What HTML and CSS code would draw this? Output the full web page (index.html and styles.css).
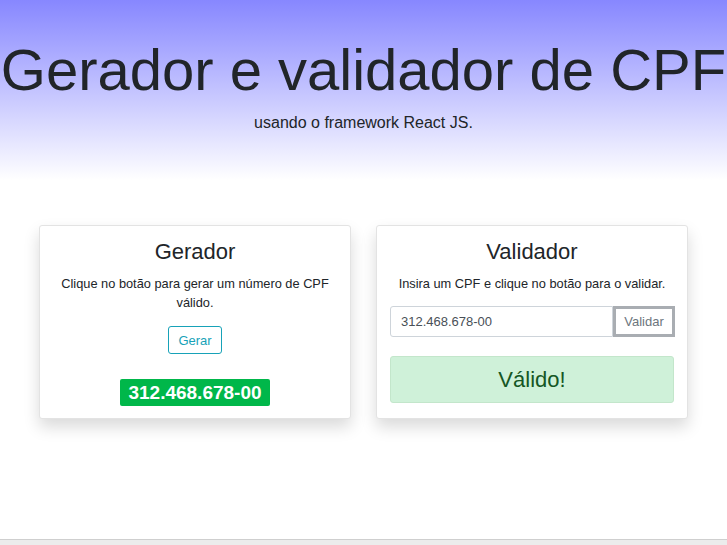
FILE: index.html
```html
<!DOCTYPE html>
<html lang="pt-BR">
<head>
<meta charset="utf-8">
<title>Gerador e validador de CPF</title>
<link rel="stylesheet" href="styles.css">
</head>
<body>
<div class="page">
  <header class="hero">
    <h1 class="title">Gerador e validador de CPF</h1>
    <p class="subtitle">usando o framework React JS.</p>
  </header>
  <main class="cards">
    <section class="card">
      <h2 class="card-title">Gerador</h2>
      <p class="card-text">Clique no botão para gerar um número de CPF válido.</p>
      <button class="btn-gerar">Gerar</button>
      <div class="badge-row"><span class="badge">312.468.678-00</span></div>
    </section>
    <section class="card">
      <h2 class="card-title">Validador</h2>
      <p class="card-text">Insira um CPF e clique no botão para o validar.</p>
      <div class="input-group">
        <input class="cpf-input" type="text" value="312.468.678-00">
        <button class="btn-validar">Validar</button>
      </div>
      <div class="alert">Válido!</div>
    </section>
  </main>
</div>
<footer class="bottom-bar"></footer>
</body>
</html>
```
FILE: styles.css
```css
* { box-sizing: border-box; }
html, body { margin: 0; padding: 0; height: 100%; }
body {
  font-family: "Liberation Sans", Arial, sans-serif;
  color: #212529;
  background: #fff;
  display: flex;
  flex-direction: column;
  overflow: hidden;
}
.page { flex: 1; }
.hero {
  background: linear-gradient(to bottom, #8787ff 0%, #ffffff 100%);
  height: 180px;
  padding-top: 36px;
  text-align: center;
}
.title {
  margin: 0;
  font-weight: 400;
  font-size: 58px;
  line-height: 68px;
  white-space: nowrap;
}
.subtitle {
  margin: 8px 0 0;
  font-size: 16px;
  line-height: 22px;
}
.cards {
  display: flex;
  justify-content: center;
  gap: 25px;
  margin-top: 45px;
}
.card {
  width: 312px;
  height: 194px;
  background: #fff;
  border: 1px solid #e3e3e3;
  border-radius: 3px;
  box-shadow: 0 8px 16px rgba(0,0,0,0.15);
  padding: 12px 13px;
  display: flex;
  flex-direction: column;
  align-items: center;
}
.card-title {
  margin: 0;
  font-size: 22px;
  font-weight: 400;
  line-height: 28px;
}
.card-text {
  margin: 8px 0 0;
  font-size: 12.8px;
  line-height: 19px;
  text-align: center;
  padding: 0 6px;
}
.btn-gerar {
  margin-top: 14px;
  font-family: inherit;
  font-size: 13px;
  color: #17a2b8;
  background: #fff;
  border: 1px solid #17a2b8;
  border-radius: 3px;
  width: 54px;
  height: 30px;
}
.badge-row { margin-top: 25px; }
.badge {
  display: inline-block;
  background: #00b74a;
  color: #fff;
  font-weight: 700;
  font-size: 19px;
  line-height: 27px;
  padding: 0 8px;
  border-radius: 2px;
}
.input-group {
  margin-top: 13px;
  display: flex;
  width: 100%;
}
.cpf-input {
  flex: 1;
  min-width: 0;
  height: 31px;
  border: 1px solid #ced4da;
  border-radius: 3px 0 0 3px;
  font-family: inherit;
  font-size: 13px;
  color: #495057;
  padding: 0 10px;
  outline: none;
}
.btn-validar {
  width: 62px;
  height: 31px;
  margin-right: -1px;
  font-family: inherit;
  font-size: 13px;
  color: #6c757d;
  background: #fff;
  border: 3px solid #a9adb2;
}
.alert {
  margin-top: 19px;
  width: 100%;
  height: 47px;
  background: #cff1d9;
  border: 1px solid #c3e6cb;
  border-radius: 3px;
  color: #155724;
  font-size: 22px;
  display: flex;
  align-items: center;
  justify-content: center;
}
.bottom-bar {
  height: 6px;
  background: #ececec;
  border-top: 1px solid #cfcfcf;
}
```
